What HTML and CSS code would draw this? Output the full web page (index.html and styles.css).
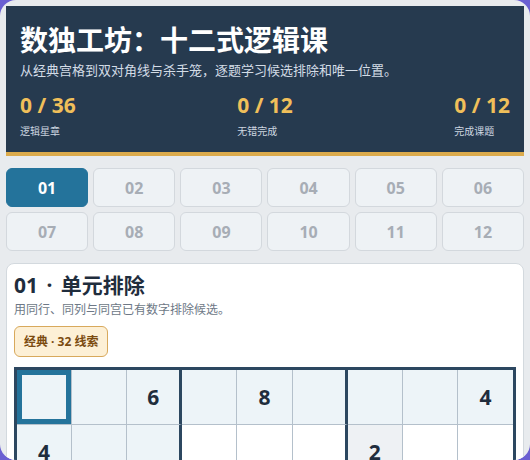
FILE: index.html
```html
<!DOCTYPE html>
<html lang="zh-CN">
<head>
<meta charset="utf-8">
<title>数独工坊：十二式逻辑课</title>
<link rel="stylesheet" href="styles.css">
</head>
<body>
<div class="app">
  <header class="hero">
    <h1 class="hero-title">数独工坊：十二式逻辑课</h1>
    <p class="hero-sub">从经典宫格到双对角线与杀手笼，逐题学习候选排除和唯一位置。</p>
    <div class="stats">
      <div class="stat"><span class="stat-num">0 / 36</span><span class="stat-label">逻辑星章</span></div>
      <div class="stat"><span class="stat-num">0 / 12</span><span class="stat-label">无错完成</span></div>
      <div class="stat"><span class="stat-num">0 / 12</span><span class="stat-label">完成课题</span></div>
    </div>
  </header>

  <nav class="lessons">
    <button class="lesson is-active">01</button>
    <button class="lesson">02</button>
    <button class="lesson">03</button>
    <button class="lesson">04</button>
    <button class="lesson">05</button>
    <button class="lesson">06</button>
    <button class="lesson">07</button>
    <button class="lesson">08</button>
    <button class="lesson">09</button>
    <button class="lesson">10</button>
    <button class="lesson">11</button>
    <button class="lesson">12</button>
  </nav>

  <section class="card">
    <h2 class="card-title">01 <span class="sep">·</span> 单元排除</h2>
    <p class="card-sub">用同行、同列与同宫已有数字排除候选。</p>
    <span class="badge">经典 · 32 线索</span>

    <div class="board">
      <!-- row 1 -->
      <div class="cell hl selected"></div><div class="cell hl"></div><div class="cell hl given">6</div>
      <div class="cell hl"></div><div class="cell hl given">8</div><div class="cell hl"></div>
      <div class="cell hl"></div><div class="cell hl"></div><div class="cell hl given">4</div>
      <!-- row 2 -->
      <div class="cell hl given">4</div><div class="cell hl"></div><div class="cell hl"></div>
      <div class="cell"></div><div class="cell"></div><div class="cell"></div>
      <div class="cell peer given">2</div><div class="cell"></div><div class="cell"></div>
      <!-- row 3 -->
      <div class="cell hl"></div><div class="cell hl given">9</div><div class="cell hl"></div>
      <div class="cell given">3</div><div class="cell"></div><div class="cell"></div>
      <div class="cell"></div><div class="cell given">7</div><div class="cell"></div>
      <!-- row 4 -->
      <div class="cell hl given">8</div><div class="cell"></div><div class="cell"></div>
      <div class="cell"></div><div class="cell given">6</div><div class="cell"></div>
      <div class="cell"></div><div class="cell"></div><div class="cell given">3</div>
      <!-- row 5 -->
      <div class="cell hl"></div><div class="cell"></div><div class="cell given">4</div>
      <div class="cell given">8</div><div class="cell"></div><div class="cell given">3</div>
      <div class="cell"></div><div class="cell"></div><div class="cell given">1</div>
      <!-- row 6 -->
      <div class="cell hl given">7</div><div class="cell"></div><div class="cell"></div>
      <div class="cell"></div><div class="cell given">2</div><div class="cell"></div>
      <div class="cell"></div><div class="cell"></div><div class="cell given">6</div>
      <!-- row 7 -->
      <div class="cell hl"></div><div class="cell given">6</div><div class="cell"></div>
      <div class="cell"></div><div class="cell"></div><div class="cell"></div>
      <div class="cell given">2</div><div class="cell given">8</div><div class="cell"></div>
      <!-- row 8 -->
      <div class="cell hl"></div><div class="cell"></div><div class="cell"></div>
      <div class="cell given">4</div><div class="cell given">1</div><div class="cell given">9</div>
      <div class="cell"></div><div class="cell"></div><div class="cell given">5</div>
      <!-- row 9 -->
      <div class="cell hl"></div><div class="cell"></div><div class="cell"></div>
      <div class="cell"></div><div class="cell given">8</div><div class="cell"></div>
      <div class="cell"></div><div class="cell given">7</div><div class="cell given">9</div>
    </div>
  </section>
</div>
</body>
</html>
```

FILE: styles.css
```css
* {
  box-sizing: border-box;
}

html, body {
  margin: 0;
  padding: 0;
  height: 100%;
}

body {
  background: #6a5fd2;
  font-family: "Noto Sans", "Noto Sans CJK SC", sans-serif;
  color: #1f2d3d;
  overflow: hidden;
}

.app {
  height: 460px;
  background: #e8ebee;
  border-radius: 16px;
  padding: 6px;
  display: flex;
  flex-direction: column;
  gap: 12px;
  overflow: hidden;
}

/* ---------- header ---------- */
.hero {
  flex: none;
  background: #263a4f;
  border-bottom: 4px solid #dcab4c;
  padding: 17px 14px 14px;
  color: #fff;
}

.hero-title {
  margin: 0;
  font-size: 28px;
  line-height: 34px;
  font-weight: 700;
}

.hero-sub {
  margin: 4px 0 0;
  font-size: 13px;
  line-height: 18px;
  color: #d3dce6;
}

.stats {
  margin-top: 13px;
  display: flex;
  justify-content: space-between;
}

.stat {
  display: flex;
  flex-direction: column;
}

.stat-num {
  font-size: 21px;
  line-height: 26px;
  font-weight: 700;
  color: #f0bf5a;
}

.stat-label {
  margin-top: 6px;
  font-size: 10px;
  line-height: 14px;
  color: #cdd6e0;
}

/* ---------- lesson picker ---------- */
.lessons {
  flex: none;
  display: grid;
  grid-template-columns: repeat(6, 1fr);
  gap: 5px;
}

.lesson {
  height: 39px;
  border: 1px solid #d3d8dd;
  border-radius: 6px;
  background: #eef2f5;
  color: #a7adb5;
  font-family: inherit;
  font-size: 16px;
  font-weight: 700;
  padding: 0;
}

.lesson.is-active {
  background: #24739b;
  border-color: #24739b;
  color: #fff;
}

/* ---------- lesson card ---------- */
.card {
  flex: none;
  background: #fff;
  border: 1px solid #d3d9de;
  border-radius: 8px;
  padding: 7px 7px;
}

.card-title {
  margin: 0;
  font-size: 21px;
  line-height: 28px;
  font-weight: 700;
  color: #1f2d3d;
}

.card-title .sep {
  margin: 0 3px;
}

.card-sub {
  margin: 2px 0 0;
  font-size: 12px;
  line-height: 17px;
  color: #6d7886;
}

.badge {
  display: inline-block;
  margin-top: 8px;
  padding: 7px 9px;
  background: #fdf0d6;
  border: 1px solid #d8a95c;
  border-radius: 6px;
  font-size: 12px;
  line-height: 15px;
  font-weight: 700;
  color: #7b4b10;
}

/* ---------- sudoku board ---------- */
.board {
  margin-top: 10px;
  display: grid;
  grid-template-columns: repeat(9, 1fr);
  border: 3px solid #2c4760;
  background: #fff;
}

.cell {
  height: 55px;
  display: flex;
  align-items: center;
  justify-content: center;
  border-right: 1px solid #b4c0cb;
  border-bottom: 1px solid #b4c0cb;
  font-size: 21px;
  font-weight: 700;
  color: #1f2d3d;
  background: #fff;
}

.cell:nth-child(9n) {
  border-right: none;
}

.cell:nth-child(9n+3),
.cell:nth-child(9n+6) {
  border-right: 3px solid #2c4760;
}

.cell:nth-child(n+19):nth-child(-n+27),
.cell:nth-child(n+46):nth-child(-n+54) {
  border-bottom: 3px solid #2c4760;
}

.cell:nth-child(n+73) {
  border-bottom: none;
}

.cell.hl {
  background: #edf4f8;
}

.cell.peer {
  background: #eef1f4;
}

.cell.selected {
  box-shadow: inset 0 0 0 5px #24739b;
}
```
